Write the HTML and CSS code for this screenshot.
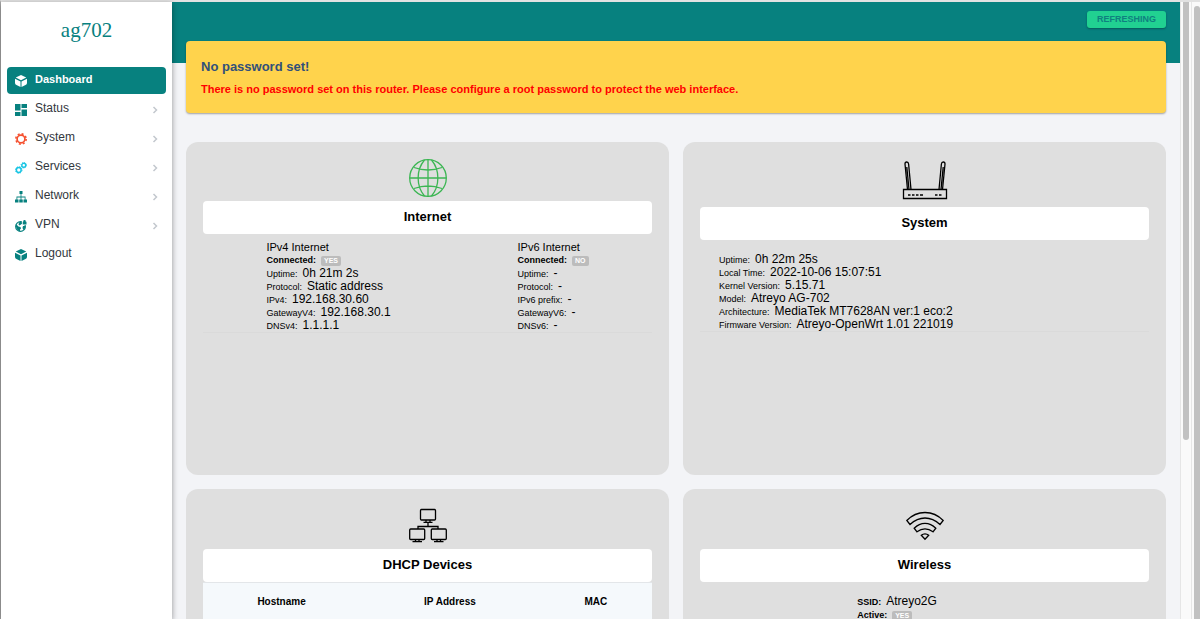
FILE: index.html
```html
<!DOCTYPE html>
<html lang="en">
<head>
<meta charset="utf-8">
<title>ag702 - Dashboard</title>
<link rel="stylesheet" href="styles.css">
</head>
<body>
<div class="app">
  <aside class="sidebar">
    <a class="brand" href="#">ag702</a>
    <nav class="nav">
      <a class="nav-item active" href="#">
        <svg class="nav-icon" viewBox="0 0 24 24" fill="currentColor"><path d="M12 0 22.500 5 12 10.500 1.500 5zM0 7.500 11 13v11L3 20Q0 18.500 0 16zM24 7.500 13 13v11l8-4q3-1.500 3-4z"/></svg>
        <span class="nav-label">Dashboard</span>
      </a>
      <a class="nav-item" href="#">
        <svg class="nav-icon" viewBox="0 0 24 24" fill="currentColor"><path d="M0 0h11v13H0zM13 0h11v8H13zM0 16h11v8H0zM13 11h11v13H13z"/></svg>
        <span class="nav-label">Status</span>
        <svg class="chevron" viewBox="0 0 6 8"><path d="M1.500 1 4.500 4 1.500 7"/></svg>
      </a>
      <a class="nav-item" href="#">
        <svg class="nav-icon red" viewBox="0 0 24 24" fill="none" stroke="currentColor"><circle cx="12" cy="12" r="7.800" stroke-width="3.400"/><circle cx="12" cy="12" r="10.300" stroke-width="3.200" stroke-dasharray="4 4.090"/></svg>
        <span class="nav-label">System</span>
        <svg class="chevron" viewBox="0 0 6 8"><path d="M1.500 1 4.500 4 1.500 7"/></svg>
      </a>
      <a class="nav-item" href="#">
        <svg class="nav-icon cyan" viewBox="0 0 24 24" fill="none" stroke="currentColor"><circle cx="7.500" cy="16" r="4.800" stroke-width="3"/><circle cx="7.500" cy="16" r="6.500" stroke-width="2" stroke-dasharray="2.600 2.505"/><circle cx="17.500" cy="6.500" r="3.900" stroke-width="2.800"/><circle cx="17.500" cy="6.500" r="5.400" stroke-width="2" stroke-dasharray="2.200 2.041"/></svg>
        <span class="nav-label">Services</span>
        <svg class="chevron" viewBox="0 0 6 8"><path d="M1.500 1 4.500 4 1.500 7"/></svg>
      </a>
      <a class="nav-item" href="#">
        <svg class="nav-icon" viewBox="0 0 24 24" fill="currentColor"><path d="M9 0h6v6H9zM11.200 6h1.600v5.200H21V18h-1.600v-5.200h-6.600V18h-1.600v-5.200H4.600V18H3v-6.800h8.200zM0 17h7v6H0zM8.500 17h7v6h-7zM17 17h7v6h-7z"/></svg>
        <span class="nav-label">Network</span>
        <svg class="chevron" viewBox="0 0 6 8"><path d="M1.500 1 4.500 4 1.500 7"/></svg>
      </a>
      <a class="nav-item" href="#">
        <svg class="nav-icon" viewBox="0 0 24 24"><circle cx="11" cy="13" r="9.700" fill="none" stroke="currentColor" stroke-width="2.400"/><path fill="currentColor" d="M2 8l5 5 4 1 1 3-2 2v4l-5-3-3-6zM11 3l4 3-3 3-3 2-2-2 1-4zM16 12l4 0 1 3-4 5-2-4z"/><path fill="#fff" d="M14 0h10v10H14z"/><path fill="currentColor" d="M15.500 3.500h1V2.500a2.500 2.500 0 0 1 5 0v1h1.500V9h-7.500z"/></svg>
        <span class="nav-label">VPN</span>
        <svg class="chevron" viewBox="0 0 6 8"><path d="M1.500 1 4.500 4 1.500 7"/></svg>
      </a>
      <a class="nav-item" href="#">
        <svg class="nav-icon" viewBox="0 0 24 24" fill="currentColor"><path d="M12 0 22.500 5 12 10.500 1.500 5zM0 7.500 11 13v11L3 20Q0 18.500 0 16zM24 7.500 13 13v11l8-4q3-1.500 3-4z"/></svg>
        <span class="nav-label">Logout</span>
      </a>
    </nav>
  </aside>

  <main class="main">
    <header class="topbar"><button class="refresh" type="button">REFRESHING</button></header>
    <div class="content">
      <section class="alert">
        <h4 class="alert-title">No password set!</h4>
        <p class="alert-text">There is no password set on this router. Please configure a root password to protect the web interface.</p>
      </section>

      <div class="cards">
        <section class="card">
          <svg class="card-icon globe" viewBox="0 0 38 38"><circle cx="19" cy="19" r="18.300"/><path d="M19 .700v36.600M.700 19h36.600M5 8.500Q19 13.500 33 8.500M5 29.500Q19 24.500 33 29.500M15.500 1C7 11 7 27 15.500 37M22.500 1C31 11 31 27 22.500 37"/></svg>
          <h3 class="card-title">Internet</h3>
          <div class="info spread">
            <div class="info-col">
              <p class="row head">IPv4 Internet</p>
              <p class="row"><b class="key">Connected:</b><span class="badge">YES</span></p>
              <p class="row"><span class="key">Uptime:</span>0h 21m 2s</p>
              <p class="row"><span class="key">Protocol:</span>Static address</p>
              <p class="row"><span class="key">IPv4:</span>192.168.30.60</p>
              <p class="row"><span class="key">GatewayV4:</span>192.168.30.1</p>
              <p class="row"><span class="key">DNSv4:</span>1.1.1.1</p>
            </div>
            <div class="info-col">
              <p class="row head">IPv6 Internet</p>
              <p class="row"><b class="key">Connected:</b><span class="badge">NO</span></p>
              <p class="row"><span class="key">Uptime:</span>-</p>
              <p class="row"><span class="key">Protocol:</span>-</p>
              <p class="row"><span class="key">IPv6 prefix:</span>-</p>
              <p class="row"><span class="key">GatewayV6:</span>-</p>
              <p class="row"><span class="key">DNSv6:</span>-</p>
            </div>
          </div>
        </section>

        <section class="card">
          <svg class="card-icon router" viewBox="0 0 46 44"><path d="M1.500 30.500h43v9h-43zM5.500 30.500 3 5Q3 3 4.700 3T6.600 5L9 30.500M7 30.500 4.800 8M40.500 30.500 43 5q0-2-1.700-2T39.400 5L37 30.500M39 30.500 41.200 8"/><path d="M6 36h2.500M10 36h2.500M14 36h2.500M18 36h3M33 36h2.500M37 36h2.500"/></svg>
          <h3 class="card-title">System</h3>
          <div class="info indent">
            <div class="info-col">
              <p class="row"><span class="key">Uptime:</span>0h 22m 25s</p>
              <p class="row"><span class="key">Local Time:</span>2022-10-06 15:07:51</p>
              <p class="row"><span class="key">Kernel Version:</span>5.15.71</p>
              <p class="row"><span class="key">Model:</span>Atreyo AG-702</p>
              <p class="row"><span class="key">Architecture:</span>MediaTek MT7628AN ver:1 eco:2</p>
              <p class="row"><span class="key">Firmware Version:</span>Atreyo-OpenWrt 1.01 221019</p>
            </div>
          </div>
        </section>

        <section class="card">
          <svg class="card-icon tall" viewBox="0 0 38 39"><rect x="11.500" y="3.500" width="15" height="10.500" rx="1"/><rect x=".700" y="23" width="15" height="10.500" rx="1"/><rect x="22.300" y="23" width="15" height="10.500" rx="1"/><path d="M17 14v2M21 14v2M14.500 16.300h9M19 16v4.500M9 23v-2.500h20V23M6.500 33.500v2M10 33.500v2M3.500 35.700h9.500M28 33.500v2M31.500 33.500v2M25 35.700h9.500"/></svg>
          <h3 class="card-title">DHCP Devices</h3>
          <table class="devices">
            <thead><tr><th class="c-host">Hostname</th><th class="c-ip">IP Address</th><th class="c-mac">MAC</th></tr></thead>
          </table>
        </section>

        <section class="card">
          <svg class="card-icon tall" viewBox="0 0 38 39"><path d="M.800 14.500Q8.500 6.500 19 6.500t18.200 8L34 18.500Q27 12 19 12T4 18.500zM8.200 22.200Q13 17.300 19 17.300t10.800 4.900L27 25.800Q23 22.800 19 22.800t-8 3zM15.300 29.300Q17 27.800 19 27.800t3.700 1.500L19 33.300z"/></svg>
          <h3 class="card-title">Wireless</h3>
          <div class="info wireless">
            <div class="info-col">
              <p class="row"><b class="key">SSID:</b>Atreyo2G</p>
              <p class="row"><b class="key">Active:</b><span class="badge">YES</span></p>
            </div>
          </div>
        </section>
      </div>
    </div>
  </main>

  <div class="track" aria-hidden="true"><div class="thumb inner"></div></div>
  <div class="track" aria-hidden="true"><div class="thumb outer"></div></div>
</div>
</body>
</html>
```
FILE: styles.css
```css
* { box-sizing: border-box; }

body {
  margin: 0;
  overflow: hidden;
  font-family: "Liberation Sans", Arial, Helvetica, sans-serif;
  font-size: 12px;
  color: #000;
}

h3, h4, p { margin: 0; }

.app {
  display: grid;
  grid-template-columns: 171px 1fr 11px 9px;
  height: 100vh;
  border-top: 2px solid #e2e2e2;
  border-left: 1px solid #a9a9a9;
  background: #f3f4f7;
}

/* Sidebar */
.sidebar {
  z-index: 1;
  padding: 0 6px;
  background: #fff;
  box-shadow: 0 2px 6px rgba(0, 0, 0, .4);
}

.brand {
  display: block;
  padding: 16px 0 24px;
  font-family: "Liberation Serif", "Times New Roman", serif;
  font-size: 21px;
  line-height: 25px;
  text-align: center;
  text-decoration: none;
  color: #07817f;
}

.nav {
  display: flex;
  flex-direction: column;
  gap: 2px;
}

.nav-item {
  display: flex;
  align-items: center;
  gap: 8px;
  height: 27px;
  padding: 0 8px 4px;
  border-radius: 4px;
  text-decoration: none;
  color: #07817f;
}

.nav-icon {
  width: 12px;
  height: 12px;
  margin-top: 4px;
}

.nav-icon.red { color: #f5502f; }
.nav-icon.cyan { color: #19c5e4; }

.nav-label {
  flex: 1;
  color: #32373d;
}

.active {
  background: #07817f;
  color: #fff;
}

.active .nav-label {
  font-size: 11px;
  font-weight: bold;
  color: #fff;
}

.chevron {
  width: 6px;
  height: 8px;
  margin-top: 4px;
  fill: none;
  stroke: #c3c8ce;
  stroke-width: 1.5;
}

/* Main area */
.main {
  min-width: 0;
  overflow: hidden;
}

.topbar {
  display: flex;
  justify-content: flex-end;
  align-items: flex-start;
  height: 61px;
  padding: 9px 14px;
  background: #07817f;
}

.refresh {
  height: 17px;
  padding: 0 10px 2px;
  border: 0;
  border-radius: 3px;
  background: #21d191;
  box-shadow: 0 1px 2px rgba(0, 0, 0, .3);
  font: bold 9px "Liberation Sans", Arial, sans-serif;
  color: #108080;
}

.content { padding: 0 14px; }

.alert {
  position: relative;
  margin-top: -22px;
  padding: 17px 15px 16px;
  border-radius: 4px;
  background: #ffd34c;
  box-shadow: 0 1px 2px rgba(0, 0, 0, .35);
}

.alert-title {
  margin-bottom: 5px;
  font-size: 13px;
  line-height: 18px;
  color: #32507a;
}

.alert-text {
  font-size: 11px;
  font-weight: bold;
  line-height: 16px;
  color: #f00;
}

.cards {
  display: grid;
  grid-template-columns: 1fr 1fr;
  grid-auto-rows: 333px;
  gap: 14px;
  margin-top: 29px;
}

.card {
  display: flex;
  flex-direction: column;
  padding: 17px;
  border-radius: 12px;
  background: #dfdfdf;
}

.card-icon {
  align-self: center;
  width: 38px;
  height: 38px;
  margin-bottom: 4px;
  fill: none;
  stroke: #000;
  stroke-width: 1.3;
}

.tall { height: 39px; }

.globe { stroke: #3cb653; }

.router {
  width: 46px;
  height: 44px;
}

.card-title {
  border-radius: 4px;
  background: #fff;
  font-size: 13px;
  line-height: 32px;
  padding-bottom: 1px;
  text-align: center;
}

.info {
  display: flex;
  padding: 13px 0 0;
  border-bottom: 1px solid #dadada;
}

.spread {
  justify-content: space-around;
  padding-top: 7px;
}

.indent { padding-left: 19px; }
.wireless { padding-left: 35%; }

.row {
  display: flex;
  align-items: baseline;
  gap: 5px;
  height: 13px;
  font-size: 12px;
  line-height: 13px;
  white-space: nowrap;
}

.wireless .row { height: 14px; }

.head { font-size: 11px; }

.key { font-size: 9px; }

.badge {
  padding: 1px 3px;
  border-radius: 2px;
  background: #bcbcbc;
  font-size: 7px;
  font-weight: bold;
  line-height: 8px;
  color: #fff;
}

.devices {
  width: 100%;
  border-collapse: collapse;
  border-top: 1px solid #e3e6e9;
  background: #f5f9fc;
}

.devices th {
  height: 38px;
  padding: 0;
  font-size: 10px;
}

.c-host { width: 35%; }
.c-ip { width: 40%; }
.c-mac { width: 25%; }

/* Scroll tracks */
.track {
  padding: 0 2px;
  border-left: 1px solid #e6e6e6;
  background: #fafafa;
}

.thumb {
  width: 6px;
  background: #c1c1c1;
}

.inner {
  height: 71%;
  border-radius: 0 0 3px 3px;
}

.outer {
  height: 100%;
  margin-top: 4px;
  border-radius: 3px 3px 0 0;
}
```
